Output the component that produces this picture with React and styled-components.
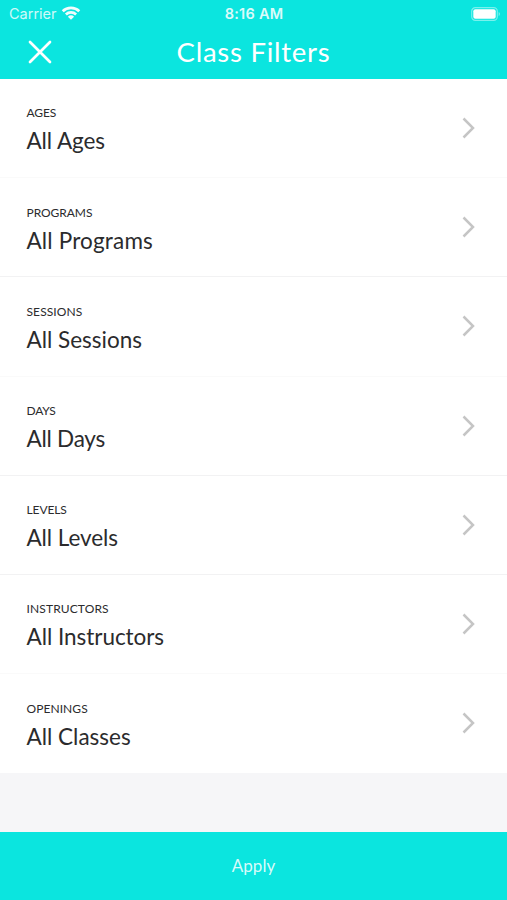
import React from 'react'
import styled, { createGlobalStyle } from 'styled-components'

const filters = [
    { label: 'AGES', value: 'All Ages', labelSpacing: -0.1, valueSpacing: -0.1, line: '#fafafa' },
    { label: 'PROGRAMS', value: 'All Programs', labelSpacing: -0.05, valueSpacing: 0.17, line: '#f2f2f3' },
    { label: 'SESSIONS', value: 'All Sessions', labelSpacing: 0.1, valueSpacing: 0, line: '#fafafa' },
    { label: 'DAYS', value: 'All Days', labelSpacing: -0.25, valueSpacing: -0.25, line: '#f2f2f3' },
    { label: 'LEVELS', value: 'All Levels', labelSpacing: -0.1, valueSpacing: -0.07, line: '#f2f2f3' },
    { label: 'INSTRUCTORS', value: 'All Instructors', labelSpacing: 0.13, valueSpacing: -0.04, line: '#fafafa' },
    { label: 'OPENINGS', value: 'All Classes', labelSpacing: 0.07, valueSpacing: 0, line: 'transparent' },
]

const App = () => {
    return (
        <Screen>
            <GlobalStyle/>
            <Header>
                <StatusBar>
                    <Carrier>
                        <span>Carrier</span>
                        <svg width='20' height='14' viewBox='0 0 20 14'>
                            <g fill='none' stroke='#fff' strokeWidth='2.7'>
                                <path d='M1.7 5.2a11.9 11.9 0 0 1 16.6 0'/>
                                <path d='M4.9 8.5a7.3 7.3 0 0 1 10.2 0'/>
                            </g>
                            <path d='M10 13.8 6.9 10.7a4.5 4.5 0 0 1 6.2 0Z' fill='#fff'/>
                        </svg>
                    </Carrier>
                    <Time>8:16 AM</Time>
                    <Battery width='30' height='14' viewBox='0 0 30 14'>
                        <rect x='.7' y='.7' width='25.6' height='12.6' rx='3.6' fill='none' stroke='#fff' strokeOpacity='.45' strokeWidth='1.2'/>
                        <rect x='2.3' y='2.3' width='22.4' height='9.4' rx='2' fill='#fff'/>
                        <path d='M27.7 5v4c1.6-.6 1.6-3.4 0-4Z' fill='#fff' fillOpacity='.5'/>
                    </Battery>
                </StatusBar>
                <TitleBar>
                    <Close aria-label='Close'>
                        <svg width='24' height='24' viewBox='0 0 24 24' fill='none' stroke='#fff' strokeWidth='2.7' strokeLinecap='round'>
                            <path d='M2 2l20 20M22 2 2 22'/>
                        </svg>
                    </Close>
                    <Title>Class Filters</Title>
                </TitleBar>
            </Header>
            <List>
                {filters.map((filter) => (
                    <Row key={filter.label} $line={filter.line}>
                        <div>
                            <Label $spacing={filter.labelSpacing}>{filter.label}</Label>
                            <Value $spacing={filter.valueSpacing}>{filter.value}</Value>
                        </div>
                        <Chevron width='13' height='22' viewBox='0 0 13 22'>
                            <path d='M1.5 1.5 11 11 1.5 20.5'/>
                        </Chevron>
                    </Row>
                ))}
            </List>
            <Apply>Apply</Apply>
        </Screen>
    )
}

export default App

const GlobalStyle = createGlobalStyle`
    body {
        margin: 0;
    }

    * {
        box-sizing: border-box;
    }
`;

const Screen = styled.main`
    display: flex;
    flex-direction: column;
    height: 900px;
    background: #f6f6f8;
    font-family: Lato, sans-serif;
    color: #2b2b2d;
`;

const Header = styled.header`
    height: 79px;
    background: #0be5df;
    color: #fff;
`;

const StatusBar = styled.div`
    display: grid;
    grid-template-columns: 1fr auto 1fr;
    align-items: center;
    height: 27px;
    padding: 0 6px 0 9px;
    font-family: Inter, sans-serif;
    font-size: 14.5px;
    line-height: 27px;
`;

const Carrier = styled.div`
    display: flex;
    align-items: center;
    gap: 4.5px;

    span {
        opacity: .8;
    }

    svg {
        margin-bottom: 2px;
        opacity: .95;
    }
`;

const Time = styled.div`
    margin-right: 2px;
    font-weight: 600;
    letter-spacing: .25px;
    opacity: .85;
`;

const Battery = styled.svg`
    justify-self: end;
`;

const TitleBar = styled.div`
    display: grid;
    grid-template-columns: 80px 1fr 80px;
    align-items: center;
    height: 50px;
`;

const Close = styled.button`
    justify-self: center;
    display: flex;
    padding: 0;
    border: 0;
    background: none;
`;

const Title = styled.h1`
    margin: 0;
    font-size: 27.5px;
    font-weight: 400;
    line-height: 34px;
    letter-spacing: .75px;
    text-align: center;
    white-space: nowrap;
`;

const List = styled.div`
    display: flex;
    flex-direction: column;
`;

const Row = styled.div`
    display: flex;
    justify-content: space-between;
    align-items: flex-start;
    height: 99.2px;
    padding: 26.4px 32px 0 26.5px;
    background: #fff;
    border-bottom: 1px solid ${(props) => props.$line};
`;

const Label = styled.div`
    font-size: 12px;
    line-height: 16px;
    letter-spacing: ${(props) => props.$spacing}px;
`;

const Value = styled.div`
    margin-top: 6px;
    font-size: 22.5px;
    line-height: 28px;
    letter-spacing: ${(props) => props.$spacing}px;
`;

const Chevron = styled.svg`
    margin-top: 11.6px;
    fill: none;
    stroke: #c5c5c5;
    stroke-width: 2.5;
`;

const Apply = styled.button`
    height: 68.5px;
    margin-top: auto;
    padding: 0;
    border: 0;
    background: #0be5df;
    color: rgba(255, 255, 255, .85);
    font-family: inherit;
    font-size: 17px;
    line-height: 24px;
`;
